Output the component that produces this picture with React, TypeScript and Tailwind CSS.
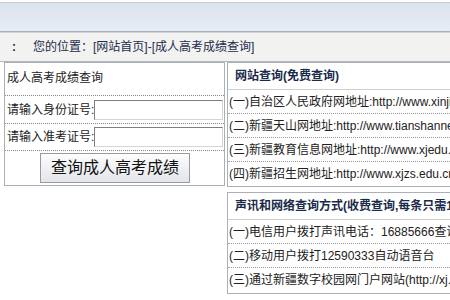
import React from "react";

const font = { fontFamily: '"Liberation Sans", "Noto Sans CJK SC", sans-serif' };

function Row({ children, last }: { children: React.ReactNode; last?: boolean }) {
  return (
    <div
      className={
        "h-[24px] flex items-center pl-[1px] whitespace-nowrap text-[12px] text-[#222] " +
        (last ? "" : "border-b border-dotted border-[#999]")
      }
    >
      {children}
    </div>
  );
}

export default function App() {
  return (
    <div className="w-[450px] h-[300px] overflow-hidden bg-white relative" style={font}>
      {/* top blue bar */}
      <div className="h-[2px] bg-white" />
      <div className="h-[30px] border-t border-b border-t-[#c3cbd3] border-b-[#a9b1b9] bg-gradient-to-b from-[#dbe3ee] to-[#e6ecf4]" />
      {/* breadcrumb */}
      <div className="h-[30px] border-t border-b border-t-[#d0d4d8] border-b-[#b4b8bd] bg-[#f2f2f0] flex items-center text-[12px] text-[#1c2c4c]">
        <span className="w-[33px] pl-[12px] font-bold leading-none">:</span>
        <span>您的位置：[网站首页]-[成人高考成绩查询]</span>
      </div>
      <div className="flex pl-[4px] gap-[2px]">
        {/* left box */}
        <div className="w-[226px] h-[124px] border border-[#a8b0b8] flex flex-col">
          <div className="w-[219px] h-[33px] pt-[8px] pl-[2px] border-b border-dotted border-[#888] text-[12px] leading-[14px] text-[#222]">
            成人高考成绩查询
          </div>
          <div className="w-[219px] h-[28px] flex items-center pl-[2px] border-b border-dotted border-[#888] text-[12px] text-[#222] whitespace-nowrap">
            <span>请输入身份证号:</span>
            <div className="w-[129px] h-[20px] border border-t-[#7f7f7f] border-l-[#7f7f7f] border-r-[#d4d4d4] border-b-[#d4d4d4] bg-white" />
          </div>
          <div className="w-[219px] h-[27px] flex items-center pl-[2px] border-b border-dotted border-[#888] text-[12px] text-[#222] whitespace-nowrap">
            <span>请输入准考证号:</span>
            <div className="w-[129px] h-[20px] border border-t-[#7f7f7f] border-l-[#7f7f7f] border-r-[#d4d4d4] border-b-[#d4d4d4] bg-white" />
          </div>
          <div className="pl-[35px] pt-[2px]">
            <div className="w-[150px] h-[30px] border border-[#9a9a9a] bg-gradient-to-b from-[#fdfdfd] to-[#e3e5ea] flex items-center justify-center text-[16px] text-[#111]">
              查询成人高考成绩
            </div>
          </div>
        </div>
        {/* right column */}
        <div className="flex-1 flex flex-col gap-[5px]">
          <div className="h-[125px] border border-r-0 border-[#a8b0b8]">
            <div className="h-[27px] pl-[7px] flex items-center border-b border-[#cfcfcf] text-[12px] font-bold text-[#1a2a4a] whitespace-nowrap">
              网站查询(免费查询)
            </div>
            <Row>(一)自治区人民政府网地址:http://www.xinjiang.gov.cn</Row>
            <Row>(二)新疆天山网地址:http://www.tianshannet.com</Row>
            <Row>(三)新疆教育信息网地址:http://www.xjedu.gov.cn</Row>
            <Row last>(四)新疆招生网地址:http://www.xjzs.edu.cn</Row>
          </div>
          <div className="h-[102px] border border-r-0 border-[#a8b0b8]">
            <div className="h-[27px] pl-[7px] flex items-center border-b border-[#cfcfcf] text-[12px] font-bold text-[#1a2a4a] whitespace-nowrap">
              声讯和网络查询方式(收费查询,每条只需1元)
            </div>
            <Row>(一)电信用户拨打声讯电话：16885666查询</Row>
            <Row>(二)移动用户拨打12590333自动语音台</Row>
            <Row last>(三)通过新疆数字校园网门户网站(http://xj.example)</Row>
          </div>
        </div>
      </div>
    </div>
  );
}
